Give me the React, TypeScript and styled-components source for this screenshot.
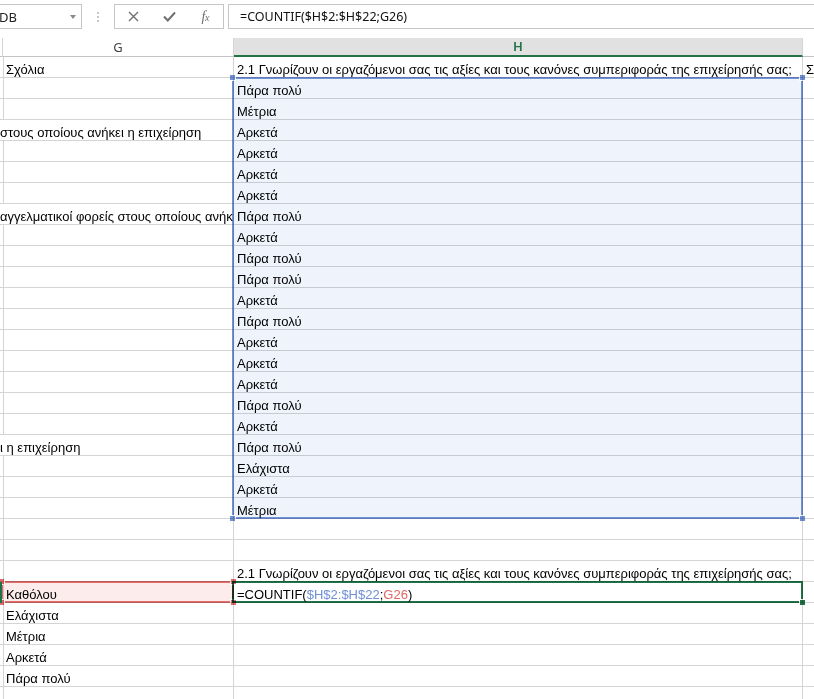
import React from 'react';
import styled, { createGlobalStyle } from 'styled-components';

const GlobalStyle = createGlobalStyle`
  html, body {
    margin: 0;
    padding: 0;
    background: #ffffff;
    overflow: hidden;
  }
`;

const ROW_H = 21;
const HEADER_H = 19;
const COL_G_LEFT = 2;
const COL_H_LEFT = 233;
const COL_I_LEFT = 802;

const Window = styled.div`
  width: 814px;
  height: 699px;
  overflow: hidden;
  position: relative;
  font-family: 'Liberation Sans', Arial, sans-serif;
  color: #000;
`;

/* ---------- formula bar ---------- */

const FormulaBar = styled.div`
  height: 25px;
  padding: 4px 0;
  display: flex;
  align-items: stretch;
  font-family: 'Noto Sans', 'Open Sans', sans-serif;
`;

const NameBox = styled.div`
  width: 82px;
  box-sizing: border-box;
  border: 1px solid #c6c6c6;
  border-left: none;
  display: flex;
  align-items: center;
  justify-content: space-between;
  padding-right: 5px;
  font-size: 13px;
  color: #222;

  span {
    margin-left: -1px;
  }
`;

const Caret = styled.div`
  width: 0;
  height: 0;
  border-left: 3px solid transparent;
  border-right: 3px solid transparent;
  border-top: 4px solid #8a8a8a;
  margin-top: 1px;
`;

const Grip = styled.div`
  width: 32px;
  display: flex;
  flex-direction: column;
  align-items: center;
  justify-content: center;
  gap: 2px;

  i {
    width: 2px;
    height: 2px;
    background: #c8c8c8;
  }
`;

const ButtonGroup = styled.div`
  width: 110px;
  box-sizing: border-box;
  border: 1px solid #c6c6c6;
  display: flex;
  padding-left: 1px;
`;

const BarButton = styled.div`
  width: 36px;
  display: flex;
  align-items: center;
  justify-content: center;
  color: #6f6f6f;
`;

const Fx = styled.span`
  font-family: 'Liberation Serif', 'Times New Roman', serif;
  font-style: italic;
  font-size: 14px;
  color: #6f6f6f;
  letter-spacing: -0.5px;

  small {
    font-size: 10px;
  }
`;

const FormulaInput = styled.div`
  flex: 1;
  margin-left: 4px;
  border: 1px solid #c6c6c6;
  border-right: none;
  display: flex;
  align-items: center;
  padding-left: 11px;
  font-size: 12.5px;
  color: #111;
`;

/* ---------- sheet ---------- */

const Sheet = styled.div`
  position: relative;
  margin-top: 5px;
`;

const Row = styled.div<{ $header?: boolean }>`
  display: grid;
  grid-template-columns: ${COL_G_LEFT + 1}px ${COL_H_LEFT - COL_G_LEFT}px ${COL_I_LEFT - COL_H_LEFT}px 1fr;
  height: ${p => (p.$header ? HEADER_H : ROW_H)}px;
`;

const HeaderCell = styled.div<{ $active?: boolean; $last?: boolean }>`
  box-sizing: border-box;
  border-right: ${p => (p.$last ? 'none' : '1px solid #d4d4d4')};
  border-bottom: ${p => (p.$active ? '2px solid #217346' : '1px solid #c4c4c4')};
  background: ${p => (p.$active ? '#e1e1e1' : '#ffffff')};
  color: ${p => (p.$active ? '#217346' : '#444')};
  font-family: 'Noto Sans', 'Open Sans', sans-serif;
  font-size: 13px;
  font-weight: ${p => (p.$active ? 600 : 400)};
  display: flex;
  align-items: center;
  justify-content: center;
  overflow: hidden;
  line-height: 1;
`;

const Cell = styled.div<{ $span?: number; $flush?: boolean; $noLine?: boolean }>`
  box-sizing: border-box;
  grid-column: span ${p => p.$span || 1};
  border-right: ${p => (p.$noLine ? 'none' : '1px solid #d4d4d4')};
  border-bottom: 1px solid #d4d4d4;
  display: flex;
  align-items: flex-end;
  padding: 0 0 0 ${p => (p.$flush ? 0 : 3)}px;
  font-size: 13px;
  line-height: 15px;
  white-space: nowrap;
  overflow: hidden;
`;

const Formula = styled.span`
  .ref1 { color: #6f8fd6; }
  .ref2 { color: #e06666; }
`;

/* overlays: selection ranges drawn on top of the grid */

const RangeBox = styled.div<{ $color: string; $fill?: string }>`
  position: absolute;
  box-sizing: border-box;
  border: 2px solid ${p => p.$color};
  background: ${p => p.$fill || 'transparent'};
  pointer-events: none;
  mix-blend-mode: multiply;
`;

const Handle = styled.div<{ $color: string }>`
  position: absolute;
  width: 5px;
  height: 5px;
  background: ${p => p.$color};
  border: 1px solid #fff;
  box-sizing: content-box;
`;

const RowMarker = styled.div`
  position: absolute;
  left: 0;
  width: 2px;
  background: #217346;
`;

type Corner = 'tl' | 'tr' | 'bl' | 'br';

const cornerStyle = (c: Corner): React.CSSProperties => ({
  top: c[0] === 't' ? -5 : undefined,
  bottom: c[0] === 'b' ? -5 : undefined,
  left: c[1] === 'l' ? -5 : undefined,
  right: c[1] === 'r' ? -5 : undefined,
});

interface BoxProps {
  top: number;
  left: number;
  width: number;
  rows: number;
  color: string;
  fill?: string;
  corners: Corner[];
}

const Box: React.FC<BoxProps> = ({ top, left, width, rows, color, fill, corners }) => (
  <RangeBox
    $color={color}
    $fill={fill}
    style={{ top: top - 1, left: left - 1, width: width + 2, height: rows * ROW_H + 1 }}
  >
    {corners.map(c => (
      <Handle key={c} $color={color} style={cornerStyle(c)} />
    ))}
  </RangeBox>
);

const QUESTION =
  '2.1 Γνωρίζουν οι εργαζόμενοι σας τις αξίες και τους κανόνες συμπεριφοράς της επιχείρησής σας;';

interface RowData {
  g?: string;
  overflow?: string;
  h?: React.ReactNode;
  i?: string;
}

const answers = [
  'Πάρα πολύ', 'Μέτρια', 'Αρκετά', 'Αρκετά', 'Αρκετά', 'Αρκετά', 'Πάρα πολύ',
  'Αρκετά', 'Πάρα πολύ', 'Πάρα πολύ', 'Αρκετά', 'Πάρα πολύ', 'Αρκετά', 'Αρκετά',
  'Αρκετά', 'Πάρα πολύ', 'Αρκετά', 'Πάρα πολύ', 'Ελάχιστα', 'Αρκετά', 'Μέτρια',
];

const overflowText: Record<number, string> = {
  4: 'στους οποίους ανήκει η επιχείρηση',
  8: 'αγγελματικοί φορείς στους οποίους ανήκει η επιχείρηση',
  19: 'ι η επιχείρηση',
};

const rows: RowData[] = [
  { g: 'Σχόλια', h: QUESTION, i: 'Σχόλια' },
  ...answers.map((a, idx) => ({ h: a, overflow: overflowText[idx + 2] })),
  {},
  {},
  { h: QUESTION },
  {
    g: 'Καθόλου',
    h: (
      <Formula>
        =COUNTIF(<span className="ref1">$H$2:$H$22</span>;<span className="ref2">G26</span>)
      </Formula>
    ),
  },
  { g: 'Ελάχιστα' },
  { g: 'Μέτρια' },
  { g: 'Αρκετά' },
  { g: 'Πάρα πολύ' },
  {},
];

const rowTop = (n: number) => HEADER_H + (n - 1) * ROW_H;

const App: React.FC = () => {
  return (
    <Window>
      <GlobalStyle />
      <FormulaBar>
        <NameBox>
          <span>DB</span>
          <Caret />
        </NameBox>
        <Grip>
          <i />
          <i />
          <i />
        </Grip>
        <ButtonGroup>
          <BarButton>
            <svg width="11" height="11" viewBox="0 0 11 11">
              <path d="M1 1 L10 10 M10 1 L1 10" stroke="#6f6f6f" strokeWidth="1.4" />
            </svg>
          </BarButton>
          <BarButton>
            <svg width="13" height="11" viewBox="0 0 13 11">
              <path d="M1 5.5 L4.8 9.5 L12 1.5" stroke="#6f6f6f" strokeWidth="2" fill="none" />
            </svg>
          </BarButton>
          <BarButton>
            <Fx>
              f<small>x</small>
            </Fx>
          </BarButton>
        </ButtonGroup>
        <FormulaInput>=COUNTIF($H$2:$H$22;G26)</FormulaInput>
      </FormulaBar>

      <Sheet>
        <Row $header>
          <HeaderCell />
          <HeaderCell>G</HeaderCell>
          <HeaderCell $active>H</HeaderCell>
          <HeaderCell $last />
        </Row>
        {rows.map((r, idx) => (
          <Row key={idx}>
            {r.overflow ? (
              <Cell $span={2} $flush>
                {r.overflow}
              </Cell>
            ) : (
              <>
                <Cell />
                <Cell>{r.g}</Cell>
              </>
            )}
            <Cell>{r.h}</Cell>
            <Cell $noLine>{r.i}</Cell>
          </Row>
        ))}

        <Box
          top={rowTop(2)}
          left={COL_H_LEFT}
          width={COL_I_LEFT - COL_H_LEFT}
          rows={21}
          color="#7292d8"
          fill="#eef3fc"
          corners={['tl', 'tr', 'bl', 'br']}
        />
        <Box
          top={rowTop(26)}
          left={COL_G_LEFT}
          width={COL_H_LEFT - COL_G_LEFT}
          rows={1}
          color="#e06c6c"
          fill="#fcecec"
          corners={['tl', 'tr', 'bl', 'br']}
        />
        <Box
          top={rowTop(26)}
          left={COL_H_LEFT}
          width={COL_I_LEFT - COL_H_LEFT}
          rows={1}
          color="#217346"
          corners={['br']}
        />
        <RowMarker style={{ top: rowTop(26), height: ROW_H }} />
      </Sheet>
    </Window>
  );
};

export default App;
